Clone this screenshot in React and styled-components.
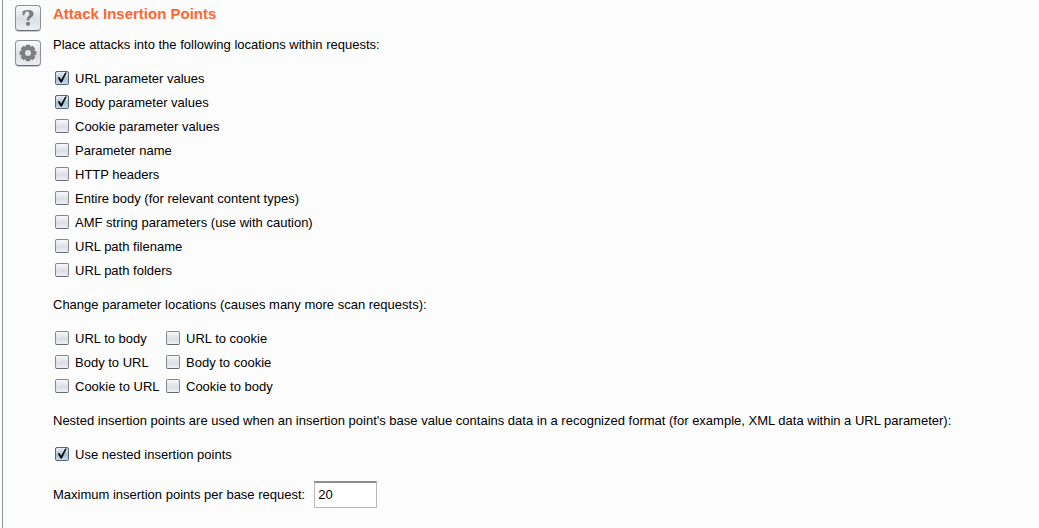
import React from "react";
import styled, { createGlobalStyle } from "styled-components";

const GlobalStyle = createGlobalStyle`
  * { box-sizing: border-box; }
  body {
    margin: 0;
    background: #fcfcfc;
    color: #000;
    font-family: "Liberation Sans", Arial, sans-serif;
    font-size: 13px;
    line-height: 24px;
  }
`;

const Page = styled.main`
  display: flex;
  align-items: stretch;
  gap: 12px;
  min-height: 100vh;
  margin-left: 2px;
  padding: 2px 12px 19px;
  border-left: 1px solid #8d95a3;
`;

const Tools = styled.div`
  display: flex;
  flex-direction: column;
  gap: 9px;
  padding-top: 3px;
`;

const ToolButton = styled.button`
  display: flex;
  align-items: center;
  justify-content: center;
  width: 26px;
  height: 26px;
  padding: 0;
  border: 1px solid #8c9097;
  border-bottom-color: #666b74;
  border-radius: 4px;
  background: linear-gradient(#f9f9fb, #dcdfe5 55%, #eceef3);
  box-shadow: 0 1px 0 #c9ccd3;
  color: #7e7e7e;
`;

const Content = styled.div`
  flex: 1;
  min-width: 0;
`;

const Title = styled.h1`
  margin: 0 0 7px;
  color: #ff6633;
  font-size: 15px;
  font-weight: bold;
  line-height: 24px;
`;

const Group = styled.fieldset`
  min-width: 0;
  margin: 0 0 10px;
  padding: 0;
  border: 0;
`;

const Intro = styled.legend`
  padding: 0;
  margin-bottom: 10px;
`;

const Options = styled.div`
  display: grid;
  grid-template-columns: ${(p) => (p.$columns === 2 ? "111px max-content" : "max-content")};
  padding-left: 2px;
`;

const Option = styled.label`
  display: flex;
  align-items: center;
  gap: 6px;
  white-space: nowrap;
`;

const CheckFrame = styled.span`
  display: grid;
  width: 14px;
  height: 14px;
  margin-bottom: 2px;
  > * { grid-area: 1 / 1; }
`;

const CheckInput = styled.input`
  appearance: none;
  width: 14px;
  height: 14px;
  margin: 0;
  border: 1px solid #85888f;
  border-bottom-color: #646870;
  border-radius: 2px;
  background: linear-gradient(#f8f8fa, #dcdee4 60%, #f0f0f5);
  &:checked {
    border-color: #52667c;
    background: linear-gradient(#e8f0f7, #a8bfd3 60%, #cadeed);
  }
  & + svg { visibility: hidden; }
  &:checked + svg { visibility: visible; }
`;

const CheckMark = styled.svg`
  pointer-events: none;
`;

const LimitRow = styled.div`
  display: flex;
  align-items: center;
  gap: 9px;
  margin-top: 14px;
`;

const LimitInput = styled.input`
  width: 63px;
  height: 27px;
  padding: 0 3px 2px;
  border: 1px solid #b8b8b8;
  border-top: 2px solid #8e8e8e;
  border-radius: 0;
  background: #fff;
  color: #000;
  font: inherit;
`;

const locations = [
  ["URL parameter values", true],
  ["Body parameter values", true],
  ["Cookie parameter values"],
  ["Parameter name"],
  ["HTTP headers"],
  ["Entire body (for relevant content types)"],
  ["AMF string parameters (use with caution)"],
  ["URL path filename"],
  ["URL path folders"],
];

const moves = [
  ["URL to body"],
  ["URL to cookie"],
  ["Body to URL"],
  ["Body to cookie"],
  ["Cookie to URL"],
  ["Cookie to body"],
];

function CheckGroup({ intro, items, columns }) {
  return (
    <Group>
      <Intro>{intro}</Intro>
      <Options $columns={columns}>
        {items.map(([label, checked]) => (
          <Option key={label}>
            <CheckFrame>
              <CheckInput type="checkbox" defaultChecked={Boolean(checked)} />
              <CheckMark width="14" height="14" viewBox="0 0 14 14" aria-hidden="true">
                <path d="M2.8 6.6 4.5 6 6.1 8.8 10.3 1.6h1.5L6.9 11.4H5.4Z" fill="#000" />
              </CheckMark>
            </CheckFrame>
            {label}
          </Option>
        ))}
      </Options>
    </Group>
  );
}

function HelpIcon() {
  return (
    <svg width="20" height="20" viewBox="0 0 20 20" aria-hidden="true">
      <path
        d="M4.6 7.3V3.2Q6.8 1.9 10 1.9q5.6 0 5.6 4.2 0 2.4-2.6 3.7-1.8.9-1.8 2.6H8.8q-.2-2.2.9-3.3 1.7-1.4 1.7-3.1 0-2.6-2-2.6-1.7 0-2.2 1L6.3 7.3Z"
        fill="currentColor"
      />
      <circle cx="10" cy="15.8" r="2.1" fill="currentColor" />
    </svg>
  );
}

function GearIcon() {
  return (
    <svg width="20" height="20" viewBox="0 0 20 20" aria-hidden="true">
      <g fill="currentColor">
        {[0, 45, 90, 135].map((angle) => (
          <rect key={angle} x="7.7" y="1.7" width="4.6" height="16.6" rx="1" transform={`rotate(${angle} 10 10)`} />
        ))}
        <circle cx="10" cy="10" r="6.8" />
      </g>
      <circle cx="10" cy="10" r="3" fill="#e0e3e8" />
    </svg>
  );
}

export default function App() {
  return (
    <>
      <GlobalStyle />
      <Page>
        <Tools>
          <ToolButton type="button" aria-label="Help"><HelpIcon /></ToolButton>
          <ToolButton type="button" aria-label="Options"><GearIcon /></ToolButton>
        </Tools>
        <Content>
          <Title>Attack Insertion Points</Title>
          <CheckGroup intro="Place attacks into the following locations within requests:" items={locations} />
          <CheckGroup
            intro="Change parameter locations (causes many more scan requests):"
            items={moves}
            columns={2}
          />
          <CheckGroup
            intro="Nested insertion points are used when an insertion point's base value contains data in a recognized format (for example, XML data within a URL parameter):"
            items={[["Use nested insertion points", true]]}
          />
          <LimitRow>
            <label htmlFor="limit">Maximum insertion points per base request:</label>
            <LimitInput id="limit" type="text" inputMode="numeric" defaultValue="20" />
          </LimitRow>
        </Content>
      </Page>
    </>
  );
}
